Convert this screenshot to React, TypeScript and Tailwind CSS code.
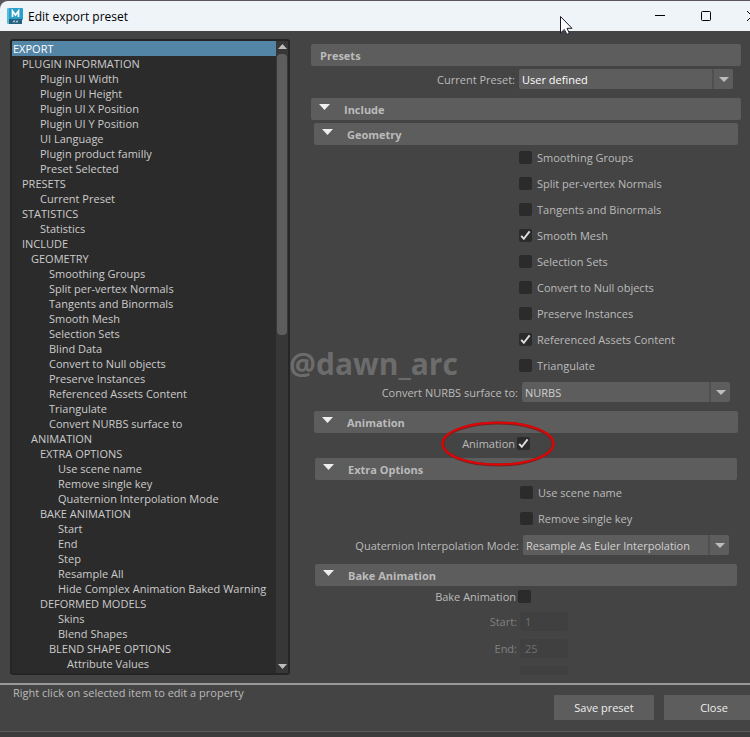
import React, { useState } from "react";

type TreeItem = { label: string; level: number };

const treeItems: TreeItem[] = [
  { label: "EXPORT", level: 0 },
  { label: "PLUGIN INFORMATION", level: 1 },
  { label: "Plugin UI Width", level: 3 },
  { label: "Plugin UI Height", level: 3 },
  { label: "Plugin UI X Position", level: 3 },
  { label: "Plugin UI Y Position", level: 3 },
  { label: "UI Language", level: 3 },
  { label: "Plugin product familly", level: 3 },
  { label: "Preset Selected", level: 3 },
  { label: "PRESETS", level: 1 },
  { label: "Current Preset", level: 3 },
  { label: "STATISTICS", level: 1 },
  { label: "Statistics", level: 3 },
  { label: "INCLUDE", level: 1 },
  { label: "GEOMETRY", level: 2 },
  { label: "Smoothing Groups", level: 4 },
  { label: "Split per-vertex Normals", level: 4 },
  { label: "Tangents and Binormals", level: 4 },
  { label: "Smooth Mesh", level: 4 },
  { label: "Selection Sets", level: 4 },
  { label: "Blind Data", level: 4 },
  { label: "Convert to Null objects", level: 4 },
  { label: "Preserve Instances", level: 4 },
  { label: "Referenced Assets Content", level: 4 },
  { label: "Triangulate", level: 4 },
  { label: "Convert NURBS surface to", level: 4 },
  { label: "ANIMATION", level: 2 },
  { label: "EXTRA OPTIONS", level: 3 },
  { label: "Use scene name", level: 5 },
  { label: "Remove single key", level: 5 },
  { label: "Quaternion Interpolation Mode", level: 5 },
  { label: "BAKE ANIMATION", level: 3 },
  { label: "Start", level: 5 },
  { label: "End", level: 5 },
  { label: "Step", level: 5 },
  { label: "Resample All", level: 5 },
  { label: "Hide Complex Animation Baked Warning", level: 5 },
  { label: "DEFORMED MODELS", level: 3 },
  { label: "Skins", level: 5 },
  { label: "Blend Shapes", level: 5 },
  { label: "BLEND SHAPE OPTIONS", level: 4 },
  { label: "Attribute Values", level: 6 },
];

const indents = ["pl-px", "pl-[10px]", "pl-[19px]", "pl-[28px]", "pl-[37px]", "pl-[46px]", "pl-[55px]"];

const geometryOptions = [
  { label: "Smoothing Groups", checked: false },
  { label: "Split per-vertex Normals", checked: false },
  { label: "Tangents and Binormals", checked: false },
  { label: "Smooth Mesh", checked: true },
  { label: "Selection Sets", checked: false },
  { label: "Convert to Null objects", checked: false },
  { label: "Preserve Instances", checked: false },
  { label: "Referenced Assets Content", checked: true },
  { label: "Triangulate", checked: false },
];

const CheckBox = ({ id, defaultChecked }: { id: string; defaultChecked?: boolean }) => (
  <span className="relative block size-[13px] shrink-0">
    <input
      id={id}
      type="checkbox"
      defaultChecked={defaultChecked}
      className="peer block size-[13px] appearance-none rounded-[2px] bg-[#2b2b2b]"
    />
    <svg
      viewBox="0 0 13 13"
      className="pointer-events-none absolute inset-0 hidden size-[13px] peer-checked:block"
    >
      <path d="M2.2 6.8 L4.8 9.8 L10.6 2.4" fill="none" stroke="#dcdcdc" strokeWidth="2" />
    </svg>
  </span>
);

const CheckRow = ({ label, checked }: { label: string; checked?: boolean }) => {
  const id = label.toLowerCase().replace(/ /g, "-");
  return (
    <div className="flex h-[26px] items-center gap-[5px] pb-px pl-[205px]">
      <CheckBox id={id} defaultChecked={checked} />
      <label htmlFor={id}>{label}</label>
    </div>
  );
};

// label on the left of its box
const ToggleRow = ({ label, checked }: { label: string; checked?: boolean }) => {
  const id = "toggle-" + label.toLowerCase().replace(/ /g, "-");
  return (
    <div className="flex h-[25px] items-center gap-[2px] pb-1">
      <label htmlFor={id} className="w-[201px] text-right">
        {label}
      </label>
      <CheckBox id={id} defaultChecked={checked} />
    </div>
  );
};

const SelectRow = ({ label, options, bright }: { label: string; options: string[]; bright?: boolean }) => {
  const id = "select-" + label.toLowerCase().replace(/ /g, "-");
  return (
    <div className="mt-[3px] mb-[9px] flex h-5 items-center gap-1 pr-2">
      <label htmlFor={id} className="w-[204px] shrink-0 text-right whitespace-nowrap">
        {label}:
      </label>
      <div className="relative h-5 min-w-0 flex-1">
        <select
          id={id}
          className={`block h-5 w-full appearance-none rounded-[2px] bg-[#5d5d5d] pr-6 pl-[3px] ${bright ? "text-white" : "text-[#d0d0d0]"}`}
        >
          {options.map((option) => (
            <option key={option}>{option}</option>
          ))}
        </select>
        <span className="pointer-events-none absolute inset-y-0 right-0 flex w-[21px] items-center justify-center border-l-2 border-[#505050]">
          <svg width="10" height="5" viewBox="0 0 10 5">
            <path d="M0 0h10L5 5z" fill="#bdbdbd" />
          </svg>
        </span>
      </div>
    </div>
  );
};

const SectionHeader = ({ title }: { title: string }) => (
  <button
    type="button"
    className="flex h-[22px] w-full items-center rounded-[2px] bg-[#5d5d5d] pl-2 text-left font-bold text-[#bbbbbb]"
  >
    <svg width="11" height="6" viewBox="0 0 11 6" className="mr-[14px] mb-1">
      <path d="M0 0h11L5.500 6z" fill="#eeeeee" />
    </svg>
    {title}
  </button>
);

const NumberRow = ({ label, value }: { label: string; value: string }) => (
  <div className="mt-px mb-2 flex h-[19px] items-center gap-[3px] text-[#808080]">
    <label htmlFor={`bake-${label}`} className="w-[202px] text-right">
      {label}:
    </label>
    <input
      id={`bake-${label}`}
      disabled
      defaultValue={value}
      className="h-[19px] w-12 rounded-[2px] bg-[#404040] px-[5px] text-[#707070]"
    />
  </div>
);

const MayaLogo = () => (
  <svg width="16" height="16" viewBox="0 0 16 16" className="shrink-0">
    <rect x="0" y="0" width="14" height="16" rx="1" fill="#7fd0e6" />
    <rect x="2" y="0" width="14" height="12" rx="1" fill="#2a9fc9" />
    <path d="M2 11h13v5H2z" fill="#245f7d" />
    <path d="M2 0v16l-2-1V1z" fill="#58bbd8" />
    <path d="M5.500 9V3L8.500 7L11.500 3V9" fill="none" stroke="#fff" strokeWidth="1.700" />
    <path d="M6 14.500l1-2l1 2M9 12.500l1 2l1-2" fill="none" stroke="#c9dfe9" strokeWidth="0.800" />
  </svg>
);

const TitleBar = () => (
  <header className="flex h-[30px] shrink-0 items-center rounded-tl-lg bg-[#eff4f9] pl-[7px] text-black">
    <MayaLogo />
    <h1 className="ml-[5px] flex-1 text-[12px]">Edit export preset</h1>
    <div className="-mr-[25px] flex h-full">
      <button type="button" aria-label="Minimize" className="flex w-[46px] items-center justify-center">
        <svg width="10" height="10" viewBox="0 0 10 10">
          <path d="M0 4.500h10" stroke="#000" />
        </svg>
      </button>
      <button type="button" aria-label="Maximize" className="flex w-[46px] items-center justify-center">
        <svg width="10" height="10" viewBox="0 0 10 10">
          <rect x="0.500" y="0.500" width="9" height="9" rx="1" fill="none" stroke="#000" />
        </svg>
      </button>
      <button type="button" aria-label="Close window" className="flex w-[46px] items-center justify-center">
        <svg width="10" height="10" viewBox="0 0 10 10">
          <path d="M0 0l10 10M10 0L0 10" stroke="#000" />
        </svg>
      </button>
    </div>
  </header>
);

const PropertyTree = () => {
  const [selected, setSelected] = useState("EXPORT");
  return (
    <div className="flex w-[280px] shrink-0 overflow-hidden rounded-[3px] border-2 border-[#252525] bg-[#2b2b2b]">
      <ul className="min-w-0 flex-1 overflow-hidden text-[#cccccc]">
        {treeItems.map((item) => (
          <li
            key={item.label}
            onClick={() => setSelected(item.label)}
            className={`h-[15px] leading-[15px] whitespace-nowrap ${indents[item.level]} ${item.label === selected ? "bg-[#5285a6] text-white" : ""}`}
          >
            {item.label}
          </li>
        ))}
      </ul>
      <div className="flex w-3 shrink-0 flex-col items-center bg-[#373737]">
        <svg width="9" height="5" viewBox="0 0 9 5" className="mt-[3px] mb-[5px] shrink-0">
          <path d="M0 5h9L4.500 0z" fill="#bdbdbd" />
        </svg>
        <div className="flex w-[10px] flex-1 flex-col">
          <div className="h-[46%] rounded-[4px] bg-[#5d5d5d]"></div>
        </div>
        <svg width="9" height="5" viewBox="0 0 9 5" className="mb-1 shrink-0">
          <path d="M0 0h9L4.500 5z" fill="#bdbdbd" />
        </svg>
      </div>
    </div>
  );
};

const Settings = () => (
  <div className="min-w-0 flex-1 overflow-hidden pt-[5px]">
    <div className="flex h-[22px] items-center rounded-[2px] bg-[#5d5d5d] pl-[9px] font-bold">
      <h2>Presets</h2>
    </div>
    <SelectRow label="Current Preset" options={["User defined"]} bright />
    <SectionHeader title="Include" />
    <div className="mx-[3px] mt-[3px]">
      <SectionHeader title="Geometry" />
      {geometryOptions.map((option) => (
        <CheckRow key={option.label} label={option.label} checked={option.checked} />
      ))}
      <SelectRow label="Convert NURBS surface to" options={["NURBS", "Software Render Mesh"]} />
      <SectionHeader title="Animation" />
      <div className="relative">
        <ToggleRow label="Animation" checked />
        <svg
          width="114"
          height="46"
          viewBox="0 0 114 46"
          className="pointer-events-none absolute -top-3 left-[127px] z-10"
        >
          <ellipse cx="57" cy="23" rx="55" ry="21" fill="none" stroke="#7a2020" strokeWidth="3" />
          <ellipse cx="57" cy="22.500" rx="55.500" ry="21" fill="none" stroke="#e10505" strokeWidth="2" />
        </svg>
      </div>
      <div className="mx-px">
        <SectionHeader title="Extra Options" />
        <CheckRow label="Use scene name" />
        <CheckRow label="Remove single key" />
        <SelectRow
          label="Quaternion Interpolation Mode"
          options={["Resample As Euler Interpolation", "Retain Quaternion Interpolation"]}
        />
        <SectionHeader title="Bake Animation" />
        <ToggleRow label="Bake Animation" />
        <NumberRow label="Start" value="1" />
        <NumberRow label="End" value="25" />
        <input
          aria-label="Step"
          disabled
          className="mt-px ml-[205px] block h-[19px] w-12 rounded-[2px] bg-[#404040]"
        />
      </div>
    </div>
  </div>
);

const App = () => {
  return (
    <div className="relative flex h-screen flex-col overflow-hidden bg-[#5b565a] pt-px font-['Open_Sans','Noto_Sans',sans-serif] text-[11px] leading-[15px] text-[#bbbbbb]">
      <TitleBar />
      <main className="flex min-h-0 flex-1 gap-[21px] bg-[#444444] pt-2 pr-[9px] pb-2 pl-[10px]">
        <PropertyTree />
        <Settings />
      </main>
      <footer className="flex h-12 shrink-0 border-t-2 border-[#999999] bg-[#444444]">
        <p className="flex-1 pl-[13px]">Right click on selected item to edit a property</p>
        <div className="-mr-[14px] flex gap-[10px] pt-[10px] text-[#eeeeee]">
          <button type="button" className="h-[25px] w-[100px] bg-[#5d5d5d]">
            Save preset
          </button>
          <button type="button" className="h-[25px] w-[100px] bg-[#5d5d5d]">
            Close
          </button>
        </div>
      </footer>
      <div className="h-[6px] shrink-0 border-t border-[#5c5c5c] bg-[#3c3c3c]"></div>

      <div className="pointer-events-none absolute top-[347px] left-[289px] text-[30px] leading-[34px] font-bold text-[#6c6c6c]">
        @dawn_arc
      </div>
      <svg width="13" height="20" viewBox="0 0 13 20" className="pointer-events-none absolute top-4 left-[560px]">
        <path
          d="M0.500 0.500V17L4.300 13.400L6.900 18.500L9.400 17.300L7 12.300H12z"
          fill="#fff"
          stroke="#1a1a2a"
        />
      </svg>
    </div>
  );
};

export default App;
